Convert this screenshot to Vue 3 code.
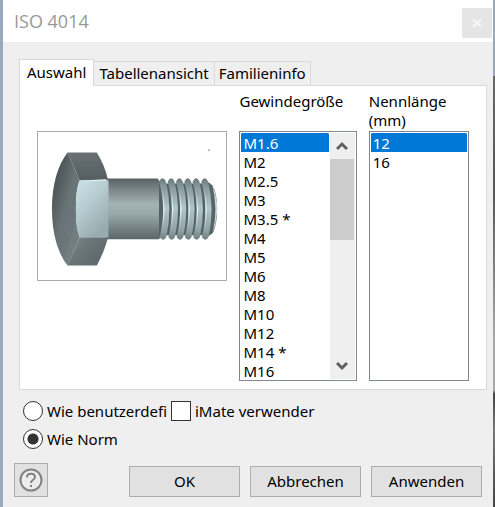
<script setup>
import { computed, ref } from 'vue'

const tabs = ['Auswahl', 'Tabellenansicht', 'Familieninfo']
const activeTab = ref('Auswahl')
const sizes = [
  'M1.6', 'M2', 'M2.5', 'M3', 'M3.5 *', 'M4', 'M5', 'M6', 'M8', 'M10', 'M12', 'M14 *', 'M16',
  'M18 *', 'M20', 'M22 *', 'M24', 'M27 *', 'M30', 'M33 *', 'M36', 'M39 *', 'M42', 'M45 *', 'M48',
  'M52 *', 'M56', 'M60 *', 'M64', 'M68 *', 'M72'
]
const visibleRows = 13
const rowHeight = 19
const size = ref('M1.6')
const length = ref('12')
const mode = ref('norm')
const imate = ref(false)

const sizeList = ref(null)
const scrolled = ref(0)
const thumb = computed(() => ({
  height: (visibleRows / sizes.length) * 100 + '%',
  top: (scrolled.value / (sizes.length * rowHeight)) * 100 + '%'
}))
function scrollRows(n) {
  sizeList.value.scrollTop += n * rowHeight
}
const threads = [399, 425, 450, 475, 500, 526]
</script>

<template>
  <div class="desktop">
    <main class="dialog">
      <header class="titlebar">
        <h1>ISO 4014</h1>
        <button class="close" type="button" aria-label="Schließen">
          <svg viewBox="0 0 10 8" width="10" height="8"><path d="M1 .5 9 7.500M9 .5 1 7.500" /></svg>
        </button>
      </header>

      <div class="body">
        <div class="tabs" role="tablist">
          <button
            v-for="t in tabs"
            :key="t"
            type="button"
            role="tab"
            class="tab"
            :class="{ active: t === activeTab }"
            :aria-selected="t === activeTab"
            @click="activeTab = t"
          >{{ t }}</button>
        </div>

        <section class="panel">
          <div class="preview">
            <svg viewBox="24 21 567 444" role="img" aria-label="Sechskantschraube">
              <defs>
                <linearGradient id="shank" x1="0" y1="0" x2="0" y2="1">
                  <stop offset="0" stop-color="#586164" />
                  <stop offset=".15" stop-color="#748084" />
                  <stop offset=".42" stop-color="#a3b3b6" />
                  <stop offset=".6" stop-color="#95a5a8" />
                  <stop offset="1" stop-color="#5a6568" />
                </linearGradient>
                <linearGradient id="thread" x1="0" y1="0" x2="0" y2="1">
                  <stop offset="0" stop-color="#6a787b" />
                  <stop offset=".15" stop-color="#889b9e" />
                  <stop offset=".48" stop-color="#b0c6c8" />
                  <stop offset=".85" stop-color="#8fa2a5" />
                  <stop offset="1" stop-color="#6e7c7f" />
                </linearGradient>
                <linearGradient id="glint" gradientUnits="userSpaceOnUse" x1="0" y1="180" x2="0" y2="330">
                  <stop offset=".1" stop-color="#e4f4f5" stop-opacity="0" />
                  <stop offset=".5" stop-color="#e4f4f5" />
                  <stop offset=".9" stop-color="#e4f4f5" stop-opacity="0" />
                </linearGradient>
                <linearGradient id="face" x1="0" y1="0" x2=".6" y2="1">
                  <stop offset="0" stop-color="#cbe4e9" />
                  <stop offset=".45" stop-color="#b7cdd1" />
                  <stop offset="1" stop-color="#98abaf" />
                </linearGradient>
                <linearGradient id="upper" x1="0" y1="0" x2="0" y2="1">
                  <stop offset="0" stop-color="#687275" />
                  <stop offset="1" stop-color="#545e61" />
                </linearGradient>
                <linearGradient id="side" gradientUnits="userSpaceOnUse" x1="66" y1="230" x2="136" y2="250">
                  <stop offset="0" stop-color="#50595c" />
                  <stop offset=".6" stop-color="#687376" />
                  <stop offset="1" stop-color="#6b777a" />
                </linearGradient>
                <linearGradient id="lower" gradientUnits="userSpaceOnUse" x1="120" y1="350" x2="190" y2="410">
                  <stop offset="0" stop-color="#7f8c8f" />
                  <stop offset=".4" stop-color="#6b777a" />
                  <stop offset="1" stop-color="#616c6f" />
                </linearGradient>
              </defs>
              <path d="M230 161H384L394 175V335L388 344H230Z" fill="url(#shank)" />
              <path d="M388 176H540V332H388Z" fill="#566265" />
              <path d="M530 167L548 181Q563 205 563 251T550 325L532 338Z" fill="#586467" />
              <path d="M549 184Q563 215 563 251T550 322Q566 251 549 184Z" fill="#c5d9db" />
              <g v-for="x in threads" :key="x">
                <path
                  :d="`M${x - 11} 171Q${x} 150 ${x + 10} 171Q${x + 30} 251 ${x + 11} 337Q${x + 2} 354 ${x - 9} 337Q${x + 13} 251 ${x - 11} 171Z`"
                  fill="url(#thread)"
                />
                <path
                  :d="`M${x - 6} 180Q${x + 14} 251 ${x - 5} 330`"
                  fill="none"
                  stroke="url(#glint)"
                  stroke-width="4"
                />
              </g>
              <path d="M113 83H201Q225 122 234 163L149 167Z" fill="url(#upper)" />
              <path d="M113 83C84 120 66 178 66 253S84 386 113 423L149 338Q138 312 138 252T149 167Z" fill="url(#side)" />
              <path d="M136 295L149 338 113 423 101 407Z" fill="#7d898c" opacity=".45" />
              <path d="M149 338H235Q222 385 201 423H113Z" fill="url(#lower)" />
              <path d="M149 167H236V338H149Q138 312 138 252T149 167Z" fill="url(#face)" />
              <rect x="537" y="74" width="3" height="3" />
            </svg>
          </div>

          <div class="column sizes">
            <label for="size">Gewindegröße</label>
            <div class="listbox">
              <select
                id="size"
                ref="sizeList"
                v-model="size"
                :size="visibleRows"
                @scroll="scrolled = $event.target.scrollTop"
              >
                <option v-for="s in sizes" :key="s" :value="s">{{ s }}</option>
              </select>
              <div class="scrollbar">
                <button type="button" aria-label="Nach oben" @click="scrollRows(-1)">
                  <svg viewBox="0 0 12 10" width="12" height="10"><path d="M1 8 6 3l5 5" /></svg>
                </button>
                <div class="track"><div class="thumb" :style="thumb"></div></div>
                <button type="button" aria-label="Nach unten" @click="scrollRows(1)">
                  <svg viewBox="0 0 12 10" width="12" height="10"><path d="M1 2 6 7l5-5" /></svg>
                </button>
              </div>
            </div>
          </div>

          <div class="column lengths">
            <label for="length">Nennlänge (mm)</label>
            <div class="listbox">
              <select id="length" v-model="length" :size="visibleRows">
                <option value="12">12</option>
                <option value="16">16</option>
              </select>
            </div>
          </div>
        </section>

        <div class="options">
          <label class="option"><input v-model="mode" type="radio" name="mode" value="custom" /><span>Wie benutzerdefi</span></label>
          <label class="option"><input v-model="imate" type="checkbox" /><span>iMate verwender</span></label>
          <label class="option"><input v-model="mode" type="radio" name="mode" value="norm" /><span>Wie Norm</span></label>
        </div>

        <footer class="actions">
          <button class="help" type="button" aria-label="Hilfe">
            <svg viewBox="0 0 24 24" width="24" height="24">
              <circle cx="12" cy="12" r="10.500" />
              <path d="M8 9.500V9C8 4.500 16 4.500 16 9c0 3-4 2.500-4 6" />
              <path d="M12 17v2" />
            </svg>
          </button>
          <button class="push" type="button">OK</button>
          <button class="push" type="button">Abbrechen</button>
          <button class="push" type="button">Anwenden</button>
        </footer>
      </div>
    </main>
  </div>
</template>

<style>
body {
  background: #efefef;
}
</style>

<style scoped>
.desktop {
  box-sizing: border-box;
  min-height: 100vh;
  padding: 0 2px 0 3px;
  background: linear-gradient(90deg, #9ba9c0 50%, transparent 50%), linear-gradient(#9ba7b9 76px, #686868 76px, #555 190px, #aaa 340px, #aaa 390px, #444 394px, #777 430px, #444);
  font-family: "Noto Sans", sans-serif;
  font-size: 15px;
  line-height: 19px;
  color: #000;
}
.dialog {
  min-height: 100vh;
  background: #efefef;
}
button, select, input {
  font: inherit;
  color: inherit;
  margin: 0;
}
.titlebar {
  display: flex;
  justify-content: space-between;
  align-items: center;
  height: 42px;
  padding: 0 1px 0 11px;
  background: #fff;
}
h1 {
  margin: 0;
  font-family: "Open Sans", sans-serif;
  font-size: 18px;
  font-weight: 400;
  color: #999;
}
.close {
  display: grid;
  place-items: center;
  width: 30px;
  height: 30px;
  margin-top: 4px;
  padding: 0;
  border: 0;
  background: #e5e5e5;
}
.close path {
  fill: none;
  stroke: #f7f7f7;
  stroke-width: 2;
}
.body {
  padding: 17px 6px 10px 11px;
}
.tabs {
  display: flex;
  align-items: flex-end;
  margin-left: 5px;
}
.tab {
  height: 24px;
  margin-left: -1px;
  padding: 0 5px;
  border: 1px solid #d9d9d9;
  border-bottom: 0;
  background: #efefef;
  white-space: nowrap;
}
.tab:last-child {
  padding: 0 4px;
}
.tab.active {
  height: 27px;
  margin: 0 0 -1px;
  padding: 0 7px 2px;
  background: #fff;
  z-index: 1;
}
.panel {
  display: flex;
  align-items: flex-end;
  gap: 12px;
  margin-left: 5px;
  padding: 6px 17px 8px;
  border: 1px solid #d9d9d9;
  background: #fff;
}
.preview {
  flex: 188;
  align-self: flex-start;
  margin-top: 39px;
  border: 1px solid #ababab;
}
.preview svg {
  display: block;
  width: 100%;
}
.column {
  min-width: 0;
}
.column label {
  display: block;
  height: 39px;
}
.sizes {
  flex: 117;
}
.lengths {
  flex: 100;
}
.listbox {
  box-sizing: border-box;
  display: flex;
  height: 250px;
  padding: 1px;
  border: 1px solid #828790;
}
select {
  flex: 1;
  min-width: 0;
  height: 246px;
  padding: 0;
  border: 0;
  outline: 0;
  background: #fff;
  overflow-y: auto;
  scrollbar-width: none;
}
option {
  height: 19px;
  min-height: 19px;
  padding: 0 2px;
  line-height: 19px;
}
option:checked {
  background: #0078d7 linear-gradient(#0078d7, #0078d7);
  -webkit-text-fill-color: #fff;
}
.scrollbar {
  display: flex;
  flex-direction: column;
  width: 25px;
  margin-left: 1px;
  background: #efefef;
}
.scrollbar button {
  display: grid;
  place-items: center;
  height: 26px;
  padding: 0;
  border: 0;
  background: none;
}
.scrollbar path {
  fill: none;
  stroke: #606060;
  stroke-width: 3;
}
.track {
  flex: 1;
  position: relative;
}
.thumb {
  position: absolute;
  left: 0;
  right: 1px;
  background: #cdcdcd;
}
.options {
  display: grid;
  grid-template-columns: 140px 140px;
  gap: 8px;
  padding: 11px 9px 0;
}
.option {
  display: flex;
  align-items: center;
  gap: 4px;
  height: 20px;
  white-space: nowrap;
}
input {
  appearance: none;
  flex: none;
  box-sizing: border-box;
  width: 20px;
  height: 20px;
  border: 1px solid #333;
  background: #fff;
}
input[type="radio"] {
  border-radius: 50%;
}
input[type="radio"]:checked {
  background: radial-gradient(circle, #333 5px, #fff 6px);
}
input[type="checkbox"]:checked {
  background: #333;
  box-shadow: inset 0 0 0 4px #fff;
}
.actions {
  display: flex;
  align-items: flex-end;
  justify-content: flex-end;
  gap: 10px;
  margin-top: 14px;
  padding-right: 5px;
}
.push {
  flex: 0 1 111px;
  height: 31px;
  padding: 0;
  border: 1px solid #adadad;
  background: #e1e1e1;
}
.help {
  display: grid;
  place-items: center;
  width: 34px;
  height: 34px;
  margin-right: auto;
  padding: 0;
  border: 1px solid #adadad;
  background: #e1e1e1;
}
.help svg {
  fill: #ececec;
  stroke: #828282;
  stroke-width: 2;
}
.help path {
  fill: none;
}
</style>
